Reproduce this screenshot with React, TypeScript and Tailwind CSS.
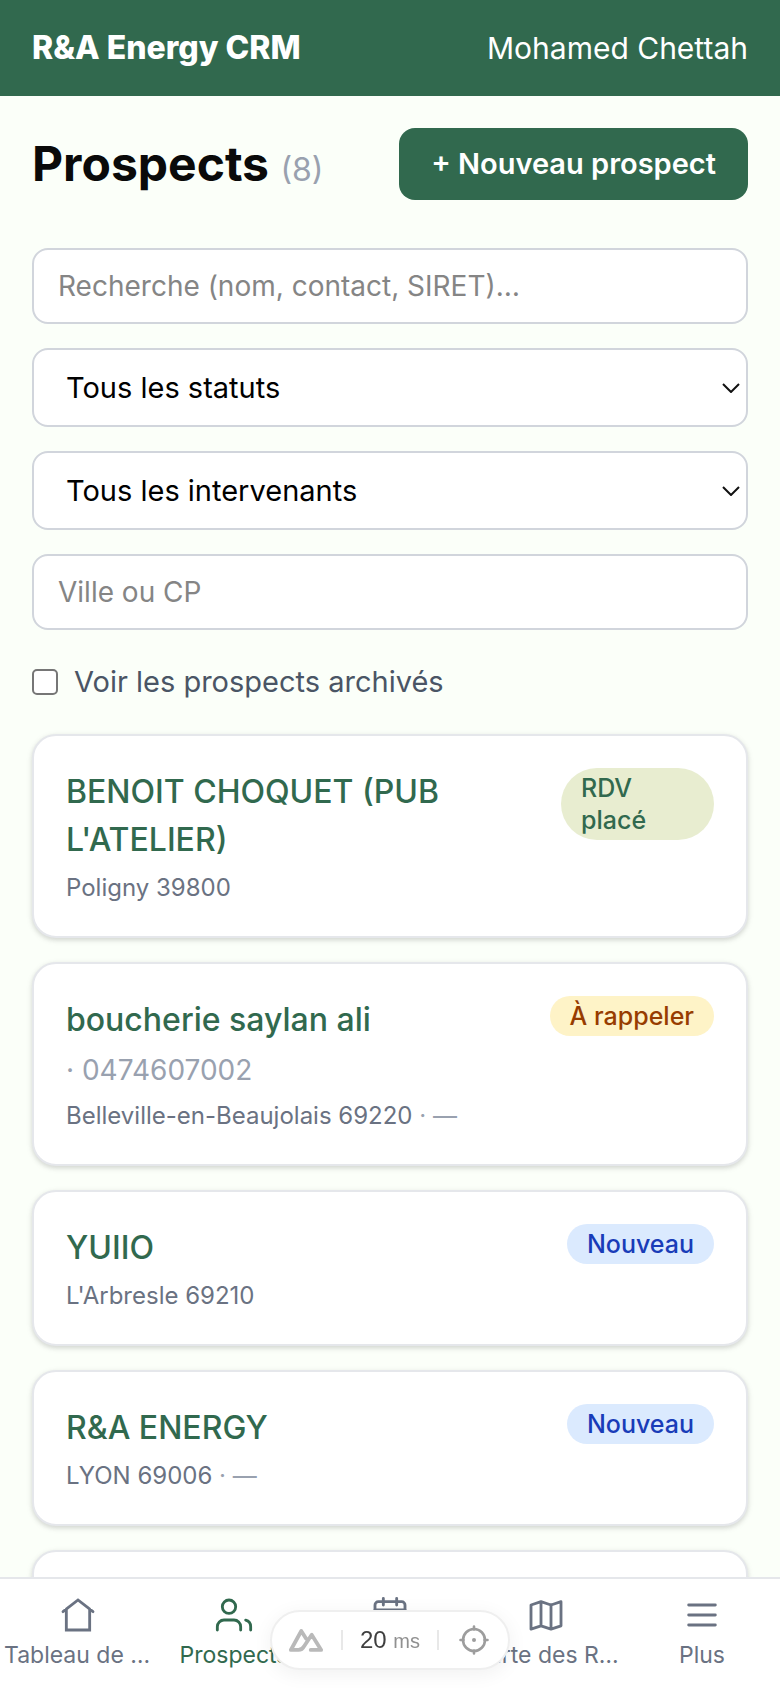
import type { ReactNode } from 'react';

type Prospect = {
  name: string;
  phone?: string;
  city: string;
  suffix?: string;
  status: string;
  badge: string;
};

const prospects: Prospect[] = [
  { name: "BENOIT CHOQUET (PUB L'ATELIER)", city: 'Poligny 39800', status: 'RDV placé', badge: 'bg-[#e8edd0] text-[#31694e] w-[153px]' },
  { name: 'boucherie saylan ali', phone: '0474607002', city: 'Belleville-en-Beaujolais 69220', suffix: '· —', status: 'À rappeler', badge: 'bg-[#fef3c7] text-[#973c00]' },
  { name: 'YUIIO', city: "L'Arbresle 69210", status: 'Nouveau', badge: 'bg-blue-100 text-[#193cb8]' },
  { name: 'R&A ENERGY', city: 'LYON 69006', suffix: '· —', status: 'Nouveau', badge: 'bg-blue-100 text-[#193cb8]' },
  { name: 'BOULANGERIE', city: 'LYON 69003', status: 'Nouveau', badge: 'bg-blue-100 text-[#193cb8]' },
];

const fieldClass = 'w-full rounded-2xl border-2 border-gray-300 bg-white';

function NavIcon({ children }: { children: ReactNode }) {
  return (
    <svg viewBox="0 0 24 24" className="h-10 w-10" fill="none" stroke="currentColor" strokeWidth="1.700" strokeLinecap="round">
      {children}
    </svg>
  );
}

function SelectField({ label }: { label: string }) {
  return (
    <div className="relative">
      <select aria-label={label} className={`${fieldClass} block h-[79px] appearance-none px-8 text-[29px] text-black`}>
        <option>{label}</option>
      </select>
      <svg viewBox="0 0 18 10" className="pointer-events-none absolute top-1/2 right-2 h-[10px] w-[18px] -translate-y-1/2" fill="none" stroke="#111" strokeWidth="2">
        <path d="M1 1l8 8 8-8" />
      </svg>
    </div>
  );
}

function ProspectCard({ prospect }: { prospect: Prospect }) {
  return (
    <li className="flex items-start justify-between gap-4 rounded-3xl border-2 border-gray-200 bg-white px-8 pt-8 pb-[30px] shadow-[0_2px_6px_rgba(0,0,0,0.1),0_2px_4px_rgba(0,0,0,0.08)]">
      <div className="max-w-[400px] min-w-0">
        <a href="#" className="block text-[32px] leading-[48px] font-medium text-[#31694e]">{prospect.name}</a>
        {prospect.phone && <p className="pt-1 text-[28px] leading-11 text-gray-400">· {prospect.phone}</p>}
        <p className="mt-[6px] text-2xl leading-9 whitespace-nowrap text-gray-500">
          {prospect.city} {prospect.suffix && <span className="text-gray-400">{prospect.suffix}</span>}
        </p>
      </div>
      <span className={`shrink-0 rounded-[36px] px-5 py-1 text-[25px] leading-8 font-medium ${prospect.badge}`}>{prospect.status}</span>
    </li>
  );
}

const navItems = [
  {
    label: 'Tableau de bord',
    icon: <path d="M3 10l9-7 9 7M5 8.500V21h14V8.500" />,
  },
  {
    label: 'Prospects',
    active: true,
    icon: (
      <>
        <circle cx="9" cy="7" r="4" />
        <path d="M2 21v-2a4 4 0 0 1 4-4h6a4 4 0 0 1 4 4v2M22 21v-2a4 4 0 0 0-3-3.870" />
      </>
    ),
  },
  {
    label: 'Calendrier',
    icon: (
      <>
        <rect x="3" y="4" width="18" height="17" rx="2" />
        <path d="M8 2v4M16 2v4M3 9h18" />
      </>
    ),
  },
  {
    label: 'Carte des RDV',
    icon: <path d="M9 4L3 6v14.500l6-2 6 2 6-2V4l-6 2-6-2zM9 4v14.500M15 6v14.500" strokeLinejoin="round" />,
  },
  {
    label: 'Plus',
    icon: <path d="M4 6h16M4 12h16M4 18h16" />,
  },
];

export default function App() {
  return (
    <div className="h-screen overflow-hidden bg-[#fbfff9] font-['Inter',sans-serif] text-[#0a0a0a]">
      <header className="flex h-24 items-center justify-between bg-[#31694e] px-8 text-white">
        <span className="text-[32px] font-extrabold">R&A Energy CRM</span>
        <span className="text-[30px]">Mohamed Chettah</span>
      </header>

      <main className="px-8 pt-8">
        <div className="mb-12 flex items-center justify-between">
          <h1 className="text-5xl font-bold">
            Prospects <span className="text-[32px] font-normal text-gray-400">(8)</span>
          </h1>
          <button className="h-[72px] rounded-2xl bg-[#31694e] px-8 text-[29px] font-semibold text-white">+ Nouveau prospect</button>
        </div>

        <div className="flex flex-col gap-6">
          <input aria-label="Recherche" placeholder="Recherche (nom, contact, SIRET)…" className={`${fieldClass} h-[76px] px-6 text-[28px] placeholder:text-[#858585]`} />
          <SelectField label="Tous les statuts" />
          <SelectField label="Tous les intervenants" />
          <input aria-label="Ville ou CP" placeholder="Ville ou CP" className={`${fieldClass} h-[76px] px-6 text-[28px] placeholder:text-[#858585]`} />
        </div>

        <label className="my-8 flex h-10 items-center gap-4 text-[29px] text-gray-600">
          <input type="checkbox" className="h-[26px] w-[26px] appearance-none rounded-[5px] border-2 border-[#767676] bg-white" />
          Voir les prospects archivés
        </label>

        <ul className="flex flex-col gap-6">
          {prospects.map((prospect) => (
            <ProspectCard key={prospect.name} prospect={prospect} />
          ))}
        </ul>
      </main>

      {/* Bottom navigation */}
      <nav className="fixed inset-x-0 bottom-0 grid h-[111px] grid-cols-5 border-t-2 border-gray-200 bg-white pt-4">
        {navItems.map((item) => (
          <a key={item.label} href="#" className={`flex min-w-0 flex-col items-center gap-1 px-1 ${item.active ? 'text-[#31694e]' : 'text-gray-500'}`}>
            <NavIcon>{item.icon}</NavIcon>
            <span className="max-w-full truncate text-[23px] leading-8">{item.label}</span>
          </a>
        ))}
      </nav>

      {/* Devtools pill */}
      <div className="fixed bottom-[18px] left-1/2 flex h-[60px] w-60 -translate-x-1/2 items-center justify-between rounded-full border-2 border-[#efefef] bg-white px-4 font-['Liberation_Sans',sans-serif] shadow-[0_4px_20px_rgba(0,0,0,0.06)]">
        <svg viewBox="0 0 38 26" className="h-[25px] w-9" fill="none" stroke="#b9b9b9" strokeWidth="4" strokeLinejoin="round" strokeLinecap="round">
          <path d="M24 23h11L25 7l-8 12q-2 4-6 4H3L14 3l5 8" />
        </svg>
        <span className="h-5 w-[2px] bg-[#e8e8e8]" />
        <span className="text-2xl text-[#3f3f3f]">
          20 <span className="text-xl text-[#909090]">ms</span>
        </span>
        <span className="h-5 w-[2px] bg-[#e8e8e8]" />
        <svg viewBox="0 0 32 32" className="h-8 w-9" fill="none" stroke="#9d9d9d" strokeWidth="2.600" strokeLinecap="round">
          <circle cx="16" cy="16" r="11" />
          <path d="M16 2.500v3M16 26.500v3M2.500 16h3M26.500 16h3" />
          <circle cx="16" cy="16" r="2" fill="#9d9d9d" stroke="none" />
        </svg>
      </div>
    </div>
  );
}
